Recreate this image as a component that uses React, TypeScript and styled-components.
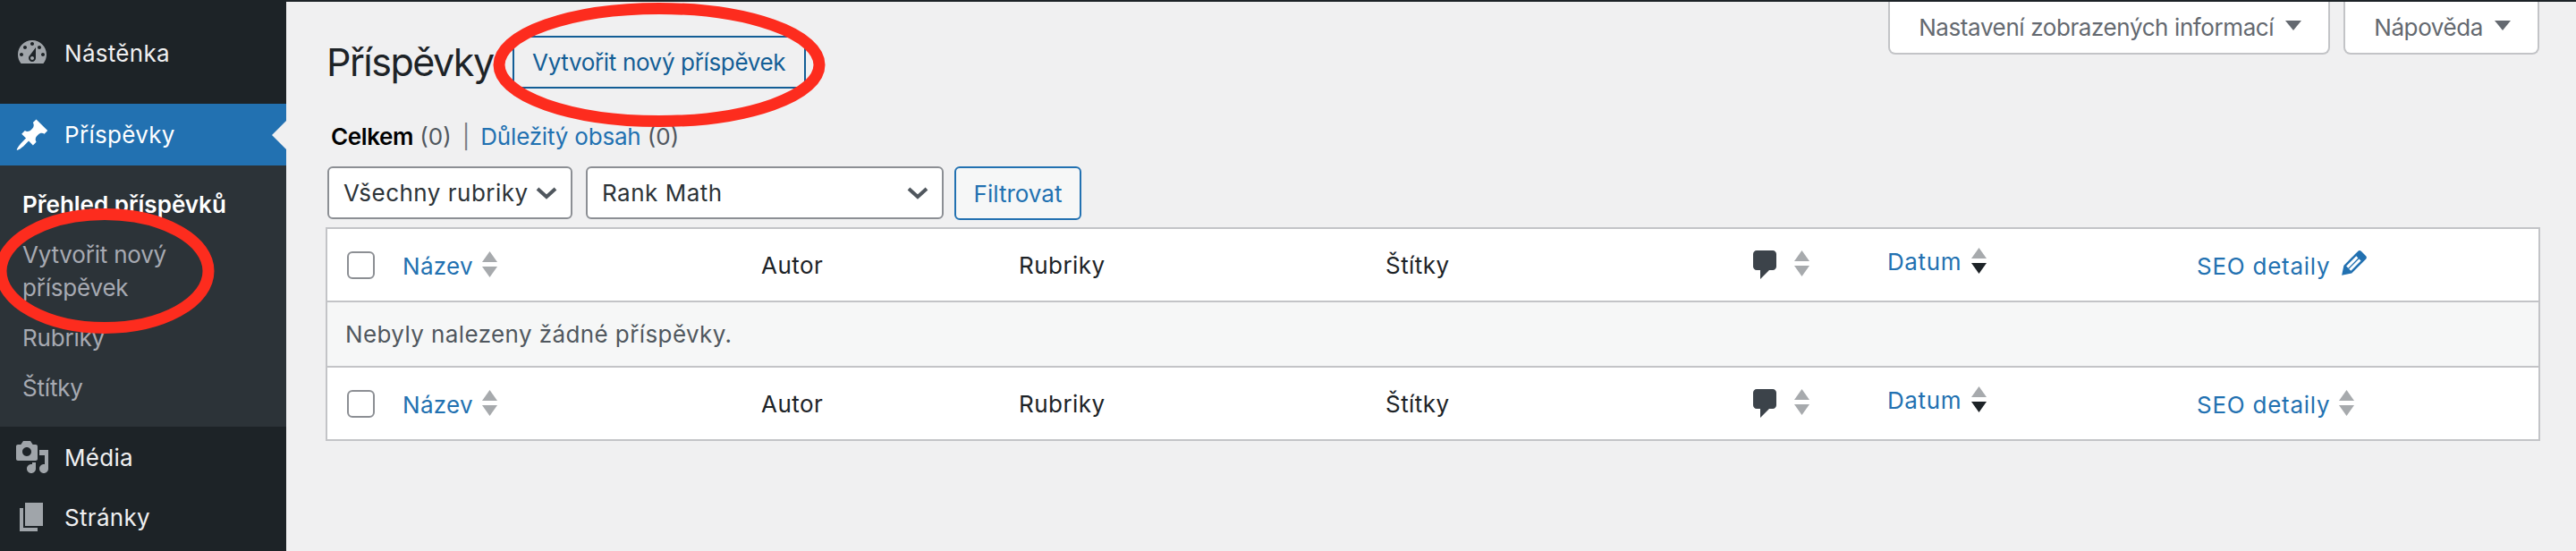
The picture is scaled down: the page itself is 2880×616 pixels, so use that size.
import React from "react";
import styled, { createGlobalStyle } from "styled-components";

const GlobalStyle = createGlobalStyle`
  html, body { margin: 0; padding: 0; background: #f0f0f1; }
  body { font-family: Inter, "Noto Sans", "Liberation Sans", sans-serif; font-size: 26px; }
  * { box-sizing: border-box; }
`;

const Page = styled.div`
  position: relative;
  width: 2880px;
  height: 616px;
  overflow: hidden;
  background: #f0f0f1;
`;
const TopStrip = styled.div`
  height: 2px;
  background: #1d2327;
`;
const Body = styled.div`
  display: flex;
  height: 614px;
`;
const Sidebar = styled.nav`
  width: 320px;
  flex: none;
  background: #1d2327;
`;
const MenuItem = styled.div<{ $h: number; $active?: boolean }>`
  position: relative;
  display: flex;
  align-items: center;
  gap: 16px;
  height: ${(p) => p.$h}px;
  padding-left: 16px;
  color: ${(p) => (p.$active ? "#fff" : "#f0f0f1")};
  background: ${(p) => (p.$active ? "#2271b1" : "transparent")};
  line-height: 37px;
  letter-spacing: 0.3px;
  svg { flex: none; fill: ${(p) => (p.$active ? "#fff" : "#a0a5aa")}; }
`;
const ActiveArrow = styled.span`
  position: absolute;
  right: 0;
  top: 50%;
  margin-top: -16px;
  border-style: solid;
  border-width: 16px 16px 16px 0;
  border-color: transparent #f0f0f1 transparent transparent;
`;
const SubMenu = styled.div`
  background: #2c3338;
  padding: 15px 0 16px;
`;
const SubItem = styled.div<{ $current?: boolean }>`
  padding: 9.5px 40px 9.5px 25px;
  line-height: 37px;
  color: ${(p) => (p.$current ? "#fff" : "#a7aab2")};
  font-weight: ${(p) => (p.$current ? 600 : 400)};
  letter-spacing: ${(p) => (p.$current ? 0 : -0.2)}px;
`;
const Main = styled.main`
  flex: 1;
  min-width: 0;
  padding: 0 40px 0 44px;
`;
const TopRow = styled.div`
  display: flex;
  justify-content: space-between;
  align-items: flex-start;
  height: 97px;
`;
const Heading = styled.div`
  display: flex;
  align-items: center;
  gap: 21px;
  margin: 38px 0 0 1px;
  height: 59px;
`;
const Title = styled.h1`
  margin: 0;
  font-size: 43px;
  font-weight: 400;
  line-height: 59px;
  letter-spacing: -1.5px;
  color: #1d2327;
`;
const AddButton = styled.a`
  display: flex;
  align-items: center;
  justify-content: center;
  width: 328px;
  height: 59px;
  border: 2px solid #135e96;
  border-radius: 6px;
  background: #f0f0f1;
  color: #135e96;
  letter-spacing: -0.35px;
`;
const Meta = styled.div`
  display: flex;
  gap: 15px;
  margin-right: 1px;
`;
const MetaTab = styled.div`
  display: flex;
  align-items: center;
  gap: 13px;
  height: 59px;
  padding: 0 30px 0 32px;
  background: #fff;
  border: 2px solid #c3c4c7;
  border-top: 0;
  border-radius: 0 0 8px 8px;
  color: #646970;
  letter-spacing: -0.4px;
`;
const MetaCaret = styled.span`
  border-style: solid;
  border-width: 11px 9.5px 0;
  border-color: #646970 transparent transparent;
  margin-top: -4px;
`;
const Stats = styled.div`
  display: flex;
  margin: 35px 0 15px 6px;
  line-height: 37px;
  white-space: pre;
  color: #50575e;
`;
const StatStrong = styled.b`
  color: #000;
  font-weight: 600;
  letter-spacing: -0.4px;
`;
const StatSep = styled.span`
  margin: 0 12px;
  color: #787c82;
`;
const StatLink = styled.a`
  color: #2271b1;
  letter-spacing: -0.2px;
`;
const Toolbar = styled.div`
  display: flex;
  gap: 15px;
  height: 60px;
  margin: 0 0 8px 2px;
`;
const Select = styled.div<{ $w: number }>`
  display: flex;
  align-items: center;
  justify-content: space-between;
  width: ${(p) => p.$w}px;
  height: 59px;
  padding: 0 15px 0 16px;
  background: #fff;
  border: 2px solid #8c8f94;
  border-radius: 6px;
  color: #2c3338;
  letter-spacing: 0.5px;
`;
const FilterButton = styled.a`
  display: flex;
  align-items: center;
  justify-content: center;
  width: 142px;
  height: 60px;
  margin-left: -3px;
  border: 2px solid #2271b1;
  border-radius: 6px;
  background: #f6f7f7;
  color: #2271b1;
`;
const Table = styled.div`
  border: 2px solid #c3c4c7;
  background: #fff;
`;
const Row = styled.div`
  display: grid;
  grid-template-columns: 63px 401px 288px 410px 405px 156px 346px 1fr;
  align-items: center;
  height: 80px;
  padding-left: 21px;
  color: #1d2327;
  letter-spacing: 0.45px;
`;
const EmptyRow = styled.div`
  display: flex;
  align-items: center;
  height: 75px;
  padding-left: 20px;
  background: #f6f7f7;
  border-top: 2px solid #c3c4c7;
  border-bottom: 2px solid #c3c4c7;
  color: #50575e;
  letter-spacing: 0.4px;
`;
const Check = styled.span`
  display: block;
  width: 31px;
  height: 31px;
  margin-left: 1px;
  background: #fff;
  border: 2px solid #8c8f94;
  border-radius: 6px;
`;
const Sortable = styled.a<{ $raised?: boolean; $spacing?: number }>`
  display: flex;
  align-items: center;
  gap: ${(p) => (p.$raised ? 11 : 10)}px;
  color: #2271b1;
  padding: ${(p) => (p.$raised ? "0 0 7px" : "2px 0 0")};
  letter-spacing: ${(p) => p.$spacing ?? 0.3}px;
`;
const SorterSvg = styled.svg`
  flex: none;
  margin-bottom: 3px;
`;
const CommentCell = styled.div`
  display: flex;
  align-items: center;
  gap: 12px;
`;
const DarkIcon = styled.svg<{ $fill: string }>`
  flex: none;
  fill: ${(p) => p.$fill};
`;
const PencilIcon = styled(DarkIcon)`
  margin: -6px 0 0 -3px;
`;
const Annotation = styled.svg`
  position: absolute;
  left: 0;
  top: 0;
  pointer-events: none;
`;

const Icon = ({ d, evenodd }: { d: string; evenodd?: boolean }) => (
  <svg width="40" height="40" viewBox="0 0 20 20">
    <path d={d} fillRule={evenodd ? "evenodd" : "nonzero"} />
  </svg>
);

const Sorter = ({ active }: { active?: boolean }) => (
  <SorterSvg width="17" height="29" viewBox="0 0 17 29">
    <polygon points="8.5,0 17,12 0,12" fill="#a7aaad" />
    <polygon points="0,17 17,17 8.5,29" fill={active ? "#1d2327" : "#a7aaad"} />
  </SorterSvg>
);

const Chevron = () => (
  <svg width="24" height="14" viewBox="0 0 24 14">
    <path d="M2 2l10 9 10-9" fill="none" stroke="#50575e" strokeWidth="4" />
  </svg>
);

const COMMENT = "M5 2h9c1.1 0 2 .9 2 2v7c0 1.1-.9 2-2 2h-2l-5 5v-5H5c-1.1 0-2-.9-2-2V4c0-1.1.9-2 2-2z";
const PENCIL =
  "M13.89 3.39l2.71 2.72c.46.46.42 1.24.03 1.64l-8.01 8.02-5.56 1.16 1.16-5.58s7.6-7.63 7.99-8.03c.39-.39 1.22-.39 1.68.07zm-2.73 2.79l-5.59 5.61 1.11 1.11 5.54-5.65zm-2.97 8.23l5.58-5.6-1.07-1.08-5.59 5.6z";

const ColumnRow = ({ footer }: { footer?: boolean }) => (
  <Row>
    <Check />
    <Sortable>
      Název <Sorter />
    </Sortable>
    <div>Autor</div>
    <div>Rubriky</div>
    <div>Štítky</div>
    <CommentCell>
      <DarkIcon $fill="#3c434a" width="40" height="40" viewBox="0 0 20 20">
        <path d={COMMENT} />
      </DarkIcon>
      <Sorter />
    </CommentCell>
    <Sortable $raised $spacing={0.6}>
      Datum <Sorter active />
    </Sortable>
    <Sortable $spacing={0.75}>
      SEO detaily{" "}
      {footer ? (
        <Sorter />
      ) : (
        <PencilIcon $fill="#2271b1" width="40" height="40" viewBox="0 0 20 20">
          <path d={PENCIL} fillRule="evenodd" />
        </PencilIcon>
      )}
    </Sortable>
  </Row>
);

export default function App() {
  return (
    <Page>
      <GlobalStyle />
      <TopStrip />
      <Body>
        <Sidebar>
          <MenuItem $h={114}>
            <Icon
              evenodd
              d="M3.76 16h12.48c1.1-1.37 1.76-3.11 1.76-5 0-4.42-3.58-8-8-8s-8 3.58-8 8c0 1.89.66 3.63 1.76 5zM10 4c.55 0 1 .45 1 1s-.45 1-1 1-1-.45-1-1 .45-1 1-1zM6 6c.55 0 1 .45 1 1s-.45 1-1 1-1-.45-1-1 .45-1 1-1zm8 0c.55 0 1 .45 1 1s-.45 1-1 1-1-.45-1-1 .45-1 1-1zm-5.37 5.55L12 7v6c0 1.1-.9 2-2 2s-2-.9-2-2c0-.57.24-1.08.63-1.45zM4 10c.55 0 1 .45 1 1s-.45 1-1 1-1-.45-1-1 .45-1 1-1zm12 0c.55 0 1 .45 1 1s-.45 1-1 1-1-.45-1-1 .45-1 1-1zm-5 3c0-.55-.45-1-1-1s-1 .45-1 1 .45 1 1 1 1-.45 1-1z"
            />
            Nástěnka
          </MenuItem>
          <MenuItem $h={69} $active>
            <Icon d="M10.44 3.02l1.82-1.82 6.36 6.35-1.83 1.82c-1.05-.68-2.48-.57-3.41.36l-.75.75c-.92.93-1.04 2.35-.35 3.41l-1.83 1.82-2.41-2.41-2.8 2.79c-.42.42-3.38 2.71-3.8 2.29s1.86-3.39 2.28-3.81l2.79-2.79L4.1 9.36l1.83-1.82c1.05.69 2.48.57 3.4-.36l.75-.75c.93-.92 1.05-2.35.36-3.41z" />
            Příspěvky
            <ActiveArrow />
          </MenuItem>
          <SubMenu>
            <SubItem $current>Přehled příspěvků</SubItem>
            <SubItem>
              Vytvořit nový
              <br />
              příspěvek
            </SubItem>
            <SubItem>Rubriky</SubItem>
            <SubItem>Štítky</SubItem>
          </SubMenu>
          <MenuItem $h={68}>
            <Icon d="M13 11V4c0-.55-.45-1-1-1h-1.67L9 1H5L3.67 3H2c-.55 0-1 .45-1 1v7c0 .55.45 1 1 1h10c.55 0 1-.45 1-1zM7 4.5c1.38 0 2.5 1.12 2.5 2.5S8.38 9.5 7 9.5 4.5 8.38 4.5 7 5.62 4.5 7 4.5zM14 6h5v10.5c0 1.38-1.12 2.5-2.5 2.5S14 17.88 14 16.5s1.12-2.5 2.5-2.5c.17 0 .34.02.5.05V9h-3V6zm-4 8.05V13h2v3.5c0 1.38-1.12 2.5-2.5 2.5S7 17.88 7 16.5 8.12 14 9.5 14c.17 0 .34.02.5.05z" />
            Média
          </MenuItem>
          <MenuItem $h={66}>
            <Icon d="M6 15V2h10v13H6zm-1 1h8v2H3V5h2v11z" />
            Stránky
          </MenuItem>
        </Sidebar>
        <Main>
          <TopRow>
            <Heading>
              <Title>Příspěvky</Title>
              <AddButton>Vytvořit nový příspěvek</AddButton>
            </Heading>
            <Meta>
              <MetaTab>
                Nastavení zobrazených informací
                <MetaCaret />
              </MetaTab>
              <MetaTab>
                Nápověda
                <MetaCaret />
              </MetaTab>
            </Meta>
          </TopRow>
          <Stats>
            <StatStrong>Celkem</StatStrong> (0)<StatSep>|</StatSep>
            <StatLink>Důležitý obsah</StatLink> (0)
          </Stats>
          <Toolbar>
            <Select $w={274}>
              Všechny rubriky
              <Chevron />
            </Select>
            <Select $w={400}>
              Rank Math
              <Chevron />
            </Select>
            <FilterButton>Filtrovat</FilterButton>
          </Toolbar>
          <Table>
            <ColumnRow />
            <EmptyRow>Nebyly nalezeny žádné příspěvky.</EmptyRow>
            <ColumnRow footer />
          </Table>
        </Main>
      </Body>
      <Annotation width="2880" height="616" viewBox="0 0 2880 616">
        <ellipse cx="737" cy="72.5" rx="179" ry="63" fill="none" stroke="#fd2c1e" strokeWidth="13" />
        <ellipse cx="117" cy="303" rx="116" ry="63.5" fill="none" stroke="#fd2c1e" strokeWidth="13" />
      </Annotation>
    </Page>
  );
}
